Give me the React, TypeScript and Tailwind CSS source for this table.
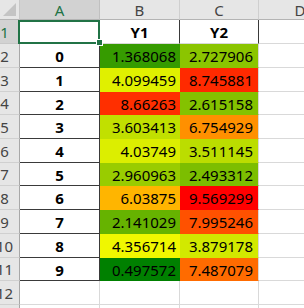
import React from "react";

const data: [string, string, string][] = [
  ["0", "1.368068", "2.727906"],
  ["1", "4.099459", "8.745881"],
  ["2", "8.66263", "2.615158"],
  ["3", "3.603413", "6.754929"],
  ["4", "4.03749", "3.511145"],
  ["5", "2.960963", "2.493312"],
  ["6", "6.03875", "9.569299"],
  ["7", "2.141029", "7.995246"],
  ["8", "4.356714", "3.879178"],
  ["9", "0.497572", "7.487079"],
];

// heights include bottom border, for sheet rows 1..13
const heights = [
  "h-[24px]",
  "h-[24px]",
  "h-[24px]",
  "h-[23px]",
  "h-[24px]",
  "h-[24px]",
  "h-[23px]",
  "h-[24px]",
  "h-[24px]",
  "h-[24px]",
  "h-[23px]",
  "h-[24px]",
  "h-[24px]",
];

function scale(v: number): string {
  const min = 0.497572;
  const max = 9.569299;
  const mid = 4.6;
  let r: number;
  let g: number;
  if (v <= mid) {
    const t = (v - min) / (mid - min);
    r = 255 * t;
    g = 128 + 127 * t;
  } else {
    const t = (v - mid) / (max - mid);
    r = 255;
    g = 255 * (1 - t);
  }
  return `rgb(${Math.round(r)}, ${Math.round(g)}, 0)`;
}

function RowHeader({ n, selected }: { n: number; selected?: boolean }) {
  return (
    <div
      className={
        selected
          ? "w-[20px] shrink-0 overflow-hidden bg-[#d2d2d2] border-r border-b border-r-[#a8a8a8] border-b-[#c8c8c8] flex items-center text-[#217346]"
          : "w-[20px] shrink-0 overflow-hidden bg-[#e6e6e6] border-r border-b border-r-[#a8a8a8] border-b-[#d0d0d0] flex items-center text-[#444444]"
      }
    >
      <span className="ml-[-11px] w-[31px] shrink-0 text-center">{n}</span>
    </div>
  );
}

export default function App() {
  return (
    <div className="relative w-[304px] h-[308px] overflow-hidden bg-white font-['Noto_Sans',sans-serif] text-[15px] leading-[20px] text-black">
      {/* column header */}
      <div className="flex h-[20px]">
        <div className="w-[20px] shrink-0 bg-[#e6e6e6] border-r border-b border-r-[#c8c8c8] border-b-[#b4b4b4]">
          <svg width="19" height="19" viewBox="0 0 19 19">
            <polygon points="16,3 16,16 3,16" fill="#c4c4c4" />
          </svg>
        </div>
        <div className="w-[80px] shrink-0 bg-[#d2d2d2] border-r border-b border-r-[#c0c0c0] border-b-[#b4b4b4] flex items-center justify-center text-[#217346]">
          A
        </div>
        <div className="w-[80px] shrink-0 bg-[#e6e6e6] border-r border-b border-r-[#cfcfcf] border-b-[#b4b4b4] flex items-center justify-center text-[#444444]">
          B
        </div>
        <div className="w-[79px] shrink-0 bg-[#e6e6e6] border-r border-b border-r-[#cfcfcf] border-b-[#b4b4b4] flex items-center justify-center text-[#444444]">
          C
        </div>
        <div className="w-[82px] shrink-0 bg-[#e6e6e6] border-b border-b-[#b4b4b4] flex items-center justify-center text-[#444444]">
          D
        </div>
      </div>

      {/* row 1 */}
      <div className={"flex " + heights[0]}>
        <RowHeader n={1} selected />
        <div className="w-[80px] shrink-0 border-r border-b border-r-[#3a3a3a] border-b-[#3a3a3a]" />
        <div className="w-[80px] shrink-0 border-r border-b border-r-[#3a3a3a] border-b-[#d9d9d9] flex items-center justify-center font-bold pt-[1px]">
          Y1
        </div>
        <div className="w-[79px] shrink-0 border-r border-b border-r-[#3a3a3a] border-b-[#d9d9d9] flex items-center justify-center font-bold pt-[1px]">
          Y2
        </div>
        <div className="w-[82px] shrink-0 border-b border-b-[#d9d9d9]" />
      </div>

      {/* data rows */}
      {data.map((row, i) => (
        <div key={i} className={"flex " + heights[i + 1]}>
          <RowHeader n={i + 2} />
          <div className="w-[80px] shrink-0 border-r border-b border-r-[#3a3a3a] border-b-[#3a3a3a] flex items-center justify-center font-bold pt-[1px]">
            {row[0]}
          </div>
          <div
            className="w-[80px] shrink-0 border-r border-b border-transparent flex items-center justify-end pr-[3px] pt-[1px]"
            style={{ backgroundColor: scale(parseFloat(row[1])) }}
          >
            {row[1]}
          </div>
          <div
            className="w-[79px] shrink-0 border-r border-b border-b-transparent border-r-[#d9d9d9] flex items-center justify-end pr-[5px] pt-[1px]"
            style={{ backgroundColor: scale(parseFloat(row[2])) }}
          >
            {row[2]}
          </div>
          <div className="w-[82px] shrink-0 border-b border-b-[#d9d9d9]" />
        </div>
      ))}

      {/* empty rows 12, 13 */}
      {[12, 13].map((n) => (
        <div key={n} className={"flex " + heights[n - 1]}>
          <RowHeader n={n} />
          <div className="w-[80px] shrink-0 border-r border-b border-[#d9d9d9]" />
          <div className="w-[80px] shrink-0 border-r border-b border-[#d9d9d9]" />
          <div className="w-[79px] shrink-0 border-r border-b border-[#d9d9d9]" />
          <div className="w-[82px] shrink-0 border-b border-b-[#d9d9d9]" />
        </div>
      ))}

      {/* selection */}
      <div className="absolute left-[18px] top-[20px] w-[82px] h-[24px] border-2 border-[#217346] pointer-events-none" />
      <div className="absolute left-[96px] top-[39px] w-[7px] h-[7px] bg-[#217346] border border-white pointer-events-none" />
    </div>
  );
}
